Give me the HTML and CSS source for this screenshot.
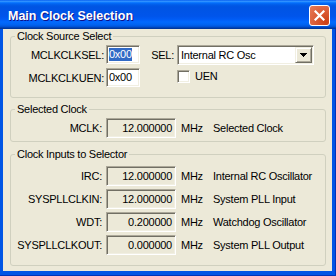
FILE: index.html
```html
<!DOCTYPE html>
<html lang="en">
<head>
    <meta charset="UTF-8">
    <meta name="viewport" content="width=device-width, initial-scale=1.0">
    <title>Main Clock Selection</title>
    <link rel="stylesheet" href="styles.css">
</head>
<body>
    <div class="window">
        <div class="titlebar">
            <span class="title">Main Clock Selection</span>
            <button class="close" type="button" aria-label="Close">
                <svg width="11" height="11" viewBox="0 0 11 11">
                    <path d="M1.5 1.5 L9.5 9.5 M9.5 1.5 L1.5 9.5" stroke="#fff" stroke-width="2.2" stroke-linecap="square"/>
                </svg>
            </button>
        </div>

        <div class="content">
            <fieldset class="group source">
                <legend>Clock Source Select</legend>
                <div class="source-grid">
                    <label class="lbl">MCLKCLKSEL:</label>
                    <div class="edit short"><span class="selected">0x00</span></div>
                    <label class="lbl sel-lbl">SEL:</label>
                    <div class="combo">
                        <span class="combo-text">Internal RC Osc</span>
                        <span class="combo-btn">
                            <svg width="7" height="4" viewBox="0 0 7 4" shape-rendering="crispEdges">
                                <path d="M0 0h7v1h-1v1h-1v1h-1v1h-1v-1h-1v-1h-1v-1h-1z" fill="#000"/>
                            </svg>
                        </span>
                    </div>

                    <label class="lbl">MCLKCLKUEN:</label>
                    <div class="edit short">0x00</div>
                    <label class="check"><span class="box"></span>UEN</label>
                </div>
            </fieldset>

            <fieldset class="group selected-clock">
                <legend>Selected Clock</legend>
                <div class="readout-grid">
                    <span class="lbl">MCLK:</span>
                    <div class="edit ro">12.000000</div>
                    <span class="unit">MHz</span>
                    <span class="desc">Selected Clock</span>
                </div>
            </fieldset>

            <fieldset class="group inputs">
                <legend>Clock Inputs to Selector</legend>
                <div class="readout-grid">
                    <span class="lbl">IRC:</span>
                    <div class="edit ro">12.000000</div>
                    <span class="unit">MHz</span>
                    <span class="desc">Internal RC Oscillator</span>

                    <span class="lbl">SYSPLLCLKIN:</span>
                    <div class="edit ro">12.000000</div>
                    <span class="unit">MHz</span>
                    <span class="desc">System PLL Input</span>

                    <span class="lbl">WDT:</span>
                    <div class="edit ro">0.200000</div>
                    <span class="unit">MHz</span>
                    <span class="desc">Watchdog Oscillator</span>

                    <span class="lbl">SYSPLLCLKOUT:</span>
                    <div class="edit ro">0.000000</div>
                    <span class="unit">MHz</span>
                    <span class="desc">System PLL Output</span>
                </div>
            </fieldset>
        </div>
    </div>
</body>
</html>
```

FILE: styles.css
```css
body {
    margin: 0;
    padding: 0;
    font-family: "Liberation Sans", Arial, sans-serif;
    font-size: 11px;
    letter-spacing: -0.25px;
    color: #000;
}

.window {
    width: 336px;
    height: 276px;
    display: flex;
    flex-direction: column;
    background-color: #0055E5;
    box-shadow: inset -1px -1px #0033B8;
}

.titlebar {
    height: 29px;
    flex: none;
    display: flex;
    justify-content: space-between;
    align-items: flex-start;
    padding: 0 6px 0 8px;
    background: linear-gradient(to bottom, #0058EE 0%, #3593FF 4%, #288EFF 6%, #127DFF 8%, #036FFC 10%, #0262EE 14%, #0057E5 20%, #0054E3 24%, #0055EB 56%, #005BF5 66%, #026AFE 76%, #0062EF 86%, #0052D6 92%, #0040AB 96%, #003092 100%);
}

.title {
    margin-top: 10px;
    color: #fff;
    font-weight: bold;
    font-size: 12.5px;
    line-height: 13px;
    letter-spacing: 0;
    text-shadow: 1px 1px #0F1089;
}

.close {
    width: 21px;
    height: 21px;
    margin-top: 5px;
    padding: 0;
    border: 1px solid #fff;
    border-radius: 3px;
    background: radial-gradient(circle at 85% 85%, #CC4014 0%, #DA5A34 45%, #E77B58 100%);
    display: flex;
    align-items: center;
    justify-content: center;
}

.content {
    flex: 1;
    margin: 0 4px 5px 3px;
    padding: 1px 6px 0 7px;
    background-color: #ECE9D8;
}

.group {
    margin: 0;
    padding: 0;
    min-width: 0;
    border: 1px solid #D0D0BF;
    border-radius: 3px;
}

.group legend {
    margin-left: 4px;
    padding: 0 2px;
    line-height: 13px;
}

.source {
    padding: 2px 0 9px;
}

.selected-clock {
    margin-top: 5px;
    padding: 2px 0 3px;
}

.inputs {
    margin-top: 6px;
    padding: 5px 0 10px;
}

.source-grid {
    display: grid;
    grid-template-columns: 95px 34px 37px 137px;
    grid-auto-rows: 20px;
    row-gap: 3px;
    align-items: center;
}

.readout-grid {
    display: grid;
    grid-template-columns: 95px 70px 37px auto;
    grid-auto-rows: 20px;
    row-gap: 3px;
    align-items: center;
}

.lbl {
    text-align: right;
    padding-right: 4px;
    white-space: nowrap;
}

.source-grid .lbl {
    padding-right: 2px;
}

.source-grid .sel-lbl {
    padding-right: 3px;
}

.edit {
    box-sizing: border-box;
    height: 20px;
    padding: 0 3px;
    line-height: 18px;
    white-space: nowrap;
    border: 1px solid;
    border-color: #ACA899 #fff #fff #ACA899;
    box-shadow: inset 1px 1px #716F64, inset -1px -1px #F1EFE2;
}

.edit.short {
    height: 19px;
    line-height: 17px;
    align-self: start;
    background-color: #fff;
    padding-left: 2px;
}

.edit.ro {
    background-color: #ECE9D8;
    text-align: right;
}

.selected {
    display: inline-block;
    line-height: 13px;
    background-color: #316AC5;
    color: #fff;
}

.unit {
    padding-left: 5px;
}

.desc {
    white-space: nowrap;
}

.combo {
    box-sizing: border-box;
    height: 20px;
    padding: 1px;
    display: flex;
    background-color: #fff;
    border: 1px solid;
    border-color: #ACA899 #fff #fff #ACA899;
    box-shadow: inset 1px 1px #716F64, inset -1px -1px #F1EFE2;
}

.combo-text {
    flex: 1;
    padding-left: 2px;
    line-height: 16px;
    white-space: nowrap;
}

.combo-btn {
    box-sizing: border-box;
    width: 17px;
    height: 16px;
    display: flex;
    align-items: center;
    justify-content: center;
    background-color: #ECE9D8;
    border: 1px solid;
    border-color: #F1EFE2 #716F64 #716F64 #F1EFE2;
    box-shadow: inset 1px 1px #fff, inset -1px -1px #ACA899;
}

.check {
    grid-column: 4;
    align-self: start;
    padding-top: 2px;
    display: flex;
    align-items: center;
    gap: 5px;
    line-height: 13px;
}

.box {
    box-sizing: border-box;
    width: 13px;
    height: 13px;
    background-color: #fff;
    border: 1px solid;
    border-color: #ACA899 #fff #fff #ACA899;
    box-shadow: inset 1px 1px #716F64, inset -1px -1px #F1EFE2;
}
```
